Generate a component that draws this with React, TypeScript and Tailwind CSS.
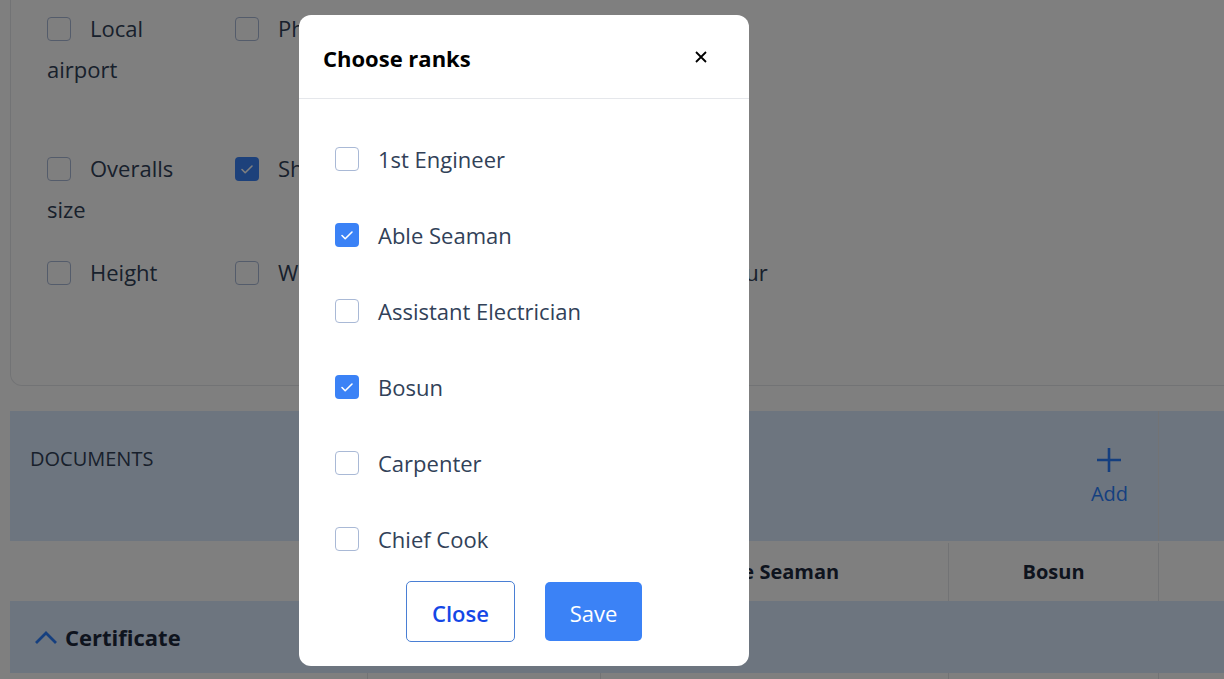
import React from 'react';

const font = { fontFamily: '"Open Sans", "Noto Sans", sans-serif' };

const CheckMark = () => (
  <svg width="24" height="24" viewBox="0 0 24 24" fill="none" className="block">
    <path d="M7 12.5l3.2 3.2L17 9" stroke="white" strokeWidth="1.6" strokeLinecap="round" strokeLinejoin="round" />
  </svg>
);

const Box = ({ checked, className = '' }: { checked?: boolean; className?: string }) =>
  checked ? (
    <span className={`inline-block w-6 h-6 rounded-[4px] bg-[#3b82f6] shrink-0 ${className}`}>
      <CheckMark />
    </span>
  ) : (
    <span className={`inline-block w-6 h-6 rounded-[4px] border border-[#a9b9d6] bg-white shrink-0 ${className}`} />
  );

type Field = { label: string; checked?: boolean } | null;

// grid fills column by column, 3 rows each
const fields: Field[] = [
  { label: 'Local airport' },
  { label: 'Overalls size' },
  { label: 'Height' },
  { label: 'Phone' },
  { label: 'Shoe size', checked: true },
  { label: 'Weight' },
  { label: 'Passport' },
  { label: 'Nationality' },
  { label: 'Eye colour' },
  null,
  null,
  { label: 'Hair colour' },
];

const ranks = [
  { label: '1st Engineer' },
  { label: 'Able Seaman', checked: true },
  { label: 'Assistant Electrician' },
  { label: 'Bosun', checked: true },
  { label: 'Carpenter' },
  { label: 'Chief Cook' },
  { label: 'Chief Engineer' },
  { label: 'Chief Officer' },
];

function FieldsCard() {
  return (
    <div className="w-[1400px] border-x border-b border-gray-200 rounded-b-xl pl-[36px] pt-[8px] pb-[92px]">
      <div className="grid grid-flow-col grid-rows-[140px_104px_auto] grid-cols-[repeat(6,188px)]">
        {fields.map((f, i) =>
          f ? (
            <div key={i} className="w-[164px] text-[22px] leading-[41px] text-slate-700">
              <Box checked={f.checked} className="align-middle mr-[19px] -mt-[4px]" />
              {f.label}
            </div>
          ) : (
            <div key={i} />
          )
        )}
      </div>
    </div>
  );
}

function DocumentsTable() {
  return (
    <div className="mt-[25px] w-[1400px]">
      <div className="flex h-[130px] bg-blue-100">
        <div className="w-[1148px] flex justify-between pl-[20px] pr-[30px]">
          <div className="pt-[33px] text-[20px] text-slate-700 uppercase">Documents</div>
          <button className="flex flex-col items-center pt-[36px] text-blue-500">
            <svg width="26" height="26" viewBox="0 0 26 26" fill="none">
              <path d="M13 1v24M1 13h24" stroke="currentColor" strokeWidth="2.6" />
            </svg>
            <span className="text-[20px] leading-[28px] mt-[7px]">Add</span>
          </button>
        </div>
        <div className="flex-1 border-l border-gray-200" />
      </div>
      <div className="flex h-[60px] pt-[2px] bg-white text-[20px] font-bold text-slate-800">
        <div className="w-[590px]" />
        <div className="w-[348px] border-l border-gray-200 flex items-center justify-center">Able Seaman</div>
        <div className="w-[210px] border-l border-gray-200 flex items-center justify-center">Bosun</div>
        <div className="flex-1 border-l border-gray-200" />
      </div>
      <div className="flex h-[72px] items-center bg-blue-100 pl-[24px]">
        <svg width="24" height="14" viewBox="0 0 24 14" fill="none" className="text-blue-500">
          <path d="M2 13L12 3l10 10" stroke="currentColor" strokeWidth="2.8" />
        </svg>
        <span className="ml-[7px] text-[22px] font-bold text-slate-800">Certificate</span>
      </div>
      <div className="flex h-[60px] bg-white">
        <div className="w-[357px]" />
        <div className="w-[233px] border-l border-gray-200" />
        <div className="w-[348px] border-l border-gray-200" />
        <div className="w-[210px] border-l border-gray-200" />
        <div className="flex-1 border-l border-gray-200" />
      </div>
    </div>
  );
}

function RanksModal() {
  return (
    <div className="absolute left-[299px] top-[15px] w-[450px] h-[651px] bg-white rounded-xl flex flex-col">
      <div className="h-[84px] shrink-0 border-b border-gray-200 flex items-center justify-between pl-[24px] pr-[42px]">
        <h2 className="text-[22px] font-bold text-black mt-[4px]">Choose ranks</h2>
        <button>
          <svg width="12" height="12" viewBox="0 0 12 12" fill="none" className="block">
            <path d="M1 1l10 10M11 1L1 11" stroke="black" strokeWidth="1.8" />
          </svg>
        </button>
      </div>
      <div className="h-[472px] overflow-hidden pt-[22px] pl-[36px]">
        {ranks.map((r) => (
          <label key={r.label} className="flex items-center h-[76px] text-[22px] text-slate-700">
            <Box checked={r.checked} />
            <span className="ml-[19px]">{r.label}</span>
          </label>
        ))}
      </div>
      <div className="flex justify-center items-center gap-[30px] pt-[10px] pb-[24px]">
        <button className="w-[109px] h-[61px] pt-[3px] rounded-[5px] border border-[#4a7fd4] text-[22px] font-semibold text-blue-700">
          Close
        </button>
        <button className="w-[97px] h-[59px] pt-[3px] rounded-[5px] bg-[#3b82f6] text-[22px] text-white">Save</button>
      </div>
    </div>
  );
}

export default function App() {
  return (
    <div className="relative w-[1224px] h-[679px] overflow-hidden bg-white" style={font}>
      <div className="pl-[10px]">
        <FieldsCard />
        <DocumentsTable />
      </div>
      <div className="absolute inset-0 bg-black/50">
        <RanksModal />
      </div>
    </div>
  );
}
